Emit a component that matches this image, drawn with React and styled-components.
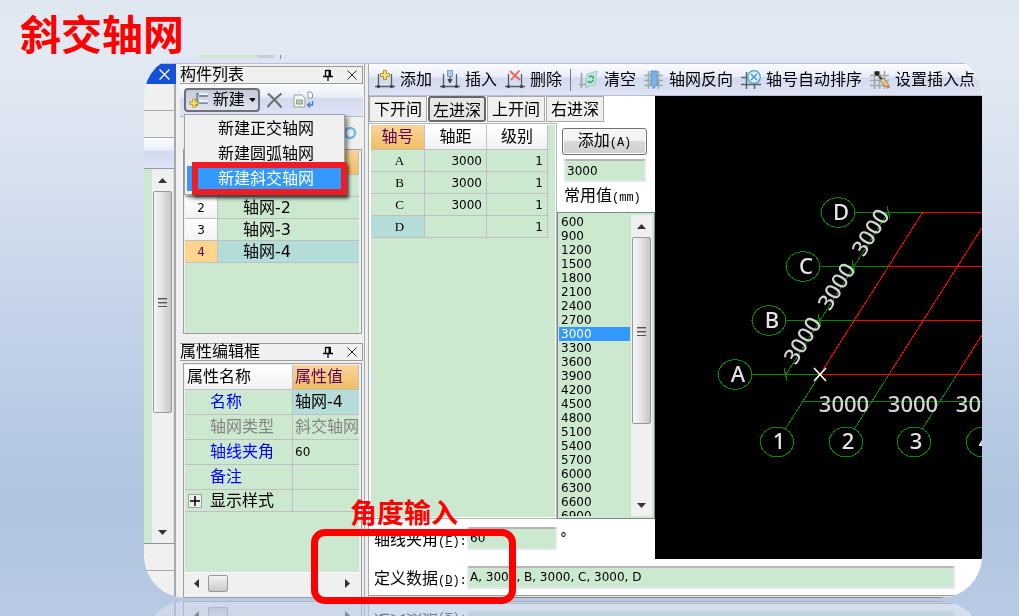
import React, { useState } from "react";
import styled, { createGlobalStyle, css } from "styled-components";

const GREEN = "#cce8cf";
const TEAL = "#b4dcd8";
const LINE = "#c0c0c4";
const FACE = "#f0f0f0";
const AMBER = "linear-gradient(#f8d49a, #f0bf62)";
const BAR = "linear-gradient(#fbfcff 0%, #e9edf9 40%, #d3daef 45%, #dfe4f5 100%)";

const GlobalStyle = createGlobalStyle`
  * { box-sizing: border-box; }
  body {
    margin: 0;
    font-family: "DejaVu Sans", "Noto Sans CJK SC", sans-serif;
    font-size: 12px;
    color: #000;
  }
  button, input { font: inherit; color: inherit; }
  ul { list-style: none; margin: 0; padding: 0; }
`;

const Page = styled.main`
  min-height: 100vh;
  padding: 0 37px 18px 144px;
  overflow: hidden;
  background: linear-gradient(#dfe7f1 0%, #e2e9f2 10%, #d5e0ee 30%, #c3d2e9 52%, #afc4df 82%, #b9cae4 100%);
`;

const Heading = styled.h1`
  height: 55px;
  margin: 0 0 0 -124px;
  padding-top: 6px;
  font-size: 41px;
  line-height: 60px;
  font-weight: 700;
  color: #f00;
`;

const Stage = styled.div`
  position: relative;
`;

const Window = styled.section`
  overflow: hidden;
  border-radius: 42px;
  background: ${FACE};
  -webkit-box-reflect: below 3px linear-gradient(transparent 0%, rgba(0, 0, 0, 0.4) 100%);
`;

const TopStrip = styled.div`
  display: flex;
  gap: 6px;
  height: 9px;
  padding-left: 54px;
  background: #dfe4f4;
  border-bottom: 1px solid #b9bed0;
`;

const StripField = styled.span`
  width: 76px;
  height: 3px;
  background: ${GREEN};
  border-right: 16px solid #c9ccd4;
`;

const StripTick = styled.span`
  width: 1px;
  height: 4px;
  background: #889;
`;

const Columns = styled.div`
  display: grid;
  grid-template-columns: 32px 189px minmax(0, 1fr);
`;

/* far left, cut-off dock */
const Dock = styled.div`
  display: flex;
  flex-direction: column;
  border-right: 2px solid #a6aaae;
`;

const DockTitle = styled.div`
  display: flex;
  justify-content: flex-end;
  align-items: center;
  height: 20px;
  padding-right: 6px;
  margin-right: -2px;
  background: #1450d8;
  color: #fff;
`;

const DockCell = styled.div`
  height: 27px;
  border-bottom: 1px solid #a8a8a8;
`;

const DockBar = styled.div`
  height: 31px;
  background: ${BAR};
  border-bottom: 1px solid #99a;
`;

const DockList = styled.div`
  flex: 1;
  display: flex;
  justify-content: flex-end;
  padding-right: 1px;
  background: ${GREEN};
  border-bottom: 1px solid #8b9598;
`;

const Scroll = styled.div`
  display: flex;
  flex-direction: column;
  justify-content: space-between;
  width: 21px;
  background: ${FACE};
`;

const ScrollStart = styled.div`
  display: flex;
  flex-direction: column;
`;

const ScrollArrow = styled.span`
  display: grid;
  place-items: center;
  width: 100%;
  height: 22px;
`;

const ScrollThumb = styled.span`
  display: grid;
  place-items: center;
  height: ${(props) => props.$size}px;
  margin: 0 1px;
  border: 1px solid #989898;
  border-radius: 2px;
  background: linear-gradient(90deg, #f6f6f6, #e4e4e6 45%, #c4c4ca);
`;

/* panels */
const Panels = styled.div`
  display: flex;
  flex-direction: column;
  padding: 2px 1px 0 4px;
  border-right: 1px solid #a6aaae;
`;

const PanelTitle = styled.header`
  display: flex;
  align-items: center;
  gap: 14px;
  height: 18px;
  padding-right: 5px;
  border: 1px solid #9a9a9a;
  border-left: 0;
`;

const PanelName = styled.h2`
  flex: 1;
  margin: 0;
  font-size: 16px;
  line-height: 16px;
  font-weight: 400;
`;

const PanelTools = styled.div`
  position: relative;
  display: flex;
  align-items: center;
  gap: 6px;
  height: 32px;
  padding-left: 4px;
  background: ${BAR};
`;

const NewButton = styled.button`
  display: flex;
  align-items: center;
  gap: 4px;
  width: 76px;
  height: 24px;
  padding: 0 3px;
  border: 2px solid #6c7078;
  border-radius: 4px;
  background: linear-gradient(#c4c9d6, #e0e4ef);
  font-size: 16px;
  line-height: 20px;
  white-space: nowrap;
`;

const IconButton = styled.button`
  display: grid;
  place-items: center;
  height: 24px;
  margin-right: 4px;
  padding: 0;
  border: 0;
  background: none;
`;

const Menu = styled.ul`
  position: absolute;
  z-index: 2;
  top: 30px;
  left: 4px;
  width: 161px;
  padding: 1px 2px 3px;
  border: 1px solid #a0a0a0;
  background: ${FACE};
  box-shadow: 3px 3px 4px rgba(0, 0, 0, 0.45);
`;

const MenuItem = styled.li`
  position: relative;
  display: flex;
  align-items: center;
  height: 25px;
  padding-left: 31px;
  font-size: 16px;
  line-height: 24px;
  white-space: nowrap;
  ${(props) =>
    props.$active &&
    css`
      background: #3399ff;
      color: #fff;
      &::after {
        content: "";
        position: absolute;
        inset: -4px -5px;
        left: 5px;
        border: 6px solid #ee1c25;
        box-shadow: 2px 3px 3px rgba(0, 0, 0, 0.5);
      }
    `}
`;

const SubTools = styled.div`
  display: flex;
  align-items: center;
  justify-content: flex-end;
  height: 33px;
  padding-right: 6px;
  border-top: 1px solid #b4b8c4;
`;

const Frame = styled.div`
  display: flex;
  flex-direction: column;
  margin: 0 1px 0 3px;
  padding: 0 2px 0 1px;
  border: 1px solid #9c9ca4;
  ${(props) =>
    props.$grow
      ? css`
          flex: 1;
          margin-top: 2px;
          padding-top: 1px;
        `
      : css`
          height: 185px;
          margin-bottom: 9px;
        `}
`;

const FrameFill = styled.div`
  flex: 1;
  background: ${GREEN};
`;

const HScroll = styled.div`
  display: flex;
  align-items: center;
  height: 22px;
  margin-bottom: 3px;
  background: ${FACE};
  border-top: 1px solid #fff;
`;

const HArrow = styled.span`
  display: grid;
  place-items: center;
  width: 23px;
  ${(props) => props.$end && "margin-left: auto;"}
`;

const HThumb = styled.span`
  width: 20px;
  height: 17px;
  border: 1px solid #989898;
  border-radius: 2px;
  background: linear-gradient(#f4f4f4, #c8c8cc);
`;

const Grid = styled.table`
  width: ${(props) => props.$width || "100%"};
  table-layout: fixed;
  border-spacing: 0;
  background: ${GREEN};

  th, td {
    height: 22px;
    padding: 0;
    border-right: 1px solid ${LINE};
    border-bottom: 1px solid ${LINE};
    font-weight: 400;
    line-height: 20px;
    white-space: nowrap;
    overflow: hidden;
  }
  thead th {
    height: 25px;
    font-size: 16px;
    background: linear-gradient(#fff, #f1f1f3);
  }
`;

const Col = styled.col`
  width: ${(props) => props.$w}px;
`;

const HeadCell = styled.th`
  ${(props) =>
    props.$left &&
    css`
      && {
        padding-left: 2px;
        text-align: left;
      }
    `}
  ${(props) =>
    props.$hot &&
    css`
      && {
        background: ${AMBER};
        color: #5a005a;
      }
    `}
`;

const RowNumber = styled.th`
  background: ${(props) => (props.$hot ? "#ffd48c" : "linear-gradient(#fff, #f3f3f3)")};
  color: ${(props) => (props.$hot ? "#5a005a" : "#000")};
`;

const TreeCell = styled.td`
  && {
    padding-left: 25px;
    border-right: 0;
  }
  font-size: 16px;
  background: ${(props) => (props.$hot ? TEAL : "transparent")};
`;

const PropRow = styled.tr`
  color: ${(props) => props.$color || "#000"};
  th, td {
    height: ${(props) => (props.$group ? 22 : 25)}px;
    text-align: left;
  }
  td:last-child { border-right: 0; }
`;

const PropName = styled.th`
  && { padding-left: ${(props) => (props.$group ? 3 : 25)}px; }
  font-size: 16px;
`;

const PropValue = styled.td`
  && { padding-left: 2px; }
  font-size: ${(props) => (props.$wide ? 16 : 12)}px;
  background: ${(props) => (props.$hot ? TEAL : "transparent")};
`;

const PropText = styled.span`
  color: ${(props) => props.$color || "inherit"};
`;

const Expander = styled.button`
  display: inline-grid;
  place-items: center;
  width: 14px;
  height: 14px;
  margin-right: 8px;
  padding: 0;
  border: 1px solid #a0a0a0;
  background: ${FACE};
  vertical-align: middle;
`;

/* editor */
const Editor = styled.div`
  display: flex;
  flex-direction: column;
  margin-left: 3px;
  border-left: 1px solid #a6aaae;
  background: #fff;
`;

const Toolbar = styled.div`
  display: flex;
  align-items: center;
  gap: 8px;
  height: 32px;
  padding-left: 6px;
  background: ${BAR};
  border-bottom: 1px solid #b8bccb;
`;

const Tool = styled.button`
  display: flex;
  flex: none;
  align-items: center;
  gap: 5px;
  padding: 0;
  border: 0;
  background: none;
  font-size: 16px;
  line-height: 24px;
`;

const Divider = styled.span`
  flex: none;
  width: 1px;
  height: 22px;
  background: #777b88;
`;

const Work = styled.div`
  display: grid;
  grid-template-columns: 286px minmax(0, 1fr);
`;

const Tabs = styled.div`
  display: flex;
  gap: 1px;
  height: 27px;
`;

const Tab = styled.button`
  height: 26px;
  padding: 1px 4px 0;
  border: 1px solid #a8a8a8;
  background: ${FACE};
  font-size: 16px;
  line-height: 22px;
  ${(props) =>
    props.$active &&
    css`
      border: 2px solid #686868;
      border-radius: 3px;
      padding: 2px 3px 0;
      background: #e6e6e6;
    `}
`;

const Split = styled.div`
  display: grid;
  grid-template-columns: 188px 98px;
`;

const AxisPane = styled.div`
  padding: 1px 1px 1px 2px;
  border-top: 1px solid #b4b4bc;
  border-right: 1px solid #b4b4bc;
  border-bottom: 1px solid #b4b4bc;
`;

const AxisFill = styled.div`
  height: 100%;
  background: ${GREEN};
`;

const AxisName = styled.th`
  && { padding-left: 4px; }
  font-family: "Liberation Serif", serif;
  font-size: 13px;
  background: ${(props) => (props.$hot ? TEAL : "transparent")};
`;

const NumCell = styled.td`
  && { padding-right: 4px; }
  text-align: right;
`;

const Values = styled.div`
  display: flex;
  flex-direction: column;
  padding-top: 5px;
`;

const AddButton = styled.button`
  height: 27px;
  margin: 0 8px 0 5px;
  padding: 0;
  border: 1px solid #707070;
  border-radius: 3px;
  background: linear-gradient(#f4f4f4 45%, #dadada 50%, #d0d0d0);
  box-shadow: inset 0 0 0 1px #fafafa;
  font-size: 16px;
  line-height: 22px;
`;

const Field = styled.input`
  width: ${(props) => props.$width || "auto"};
  height: 23px;
  padding: 0 0 0 1px;
  border: 2px solid #e3e7f0;
  border-top-color: #b4b6bc;
  border-radius: 2px;
  background: ${GREEN};
  font-size: 12px;
`;

const ValueField = styled(Field)`
  margin: 4px 9px 0 7px;
`;

const ValueLabel = styled.label`
  padding-left: 7px;
  font-size: 16px;
  line-height: 27px;
`;

const Mono = styled.span`
  font-family: "Liberation Mono", monospace;
  font-size: 12px;
`;

const ListBox = styled.div`
  display: flex;
  height: 307px;
  padding: 2px 2px 2px 1px;
  border: 1px solid #7c8890;
  background: ${GREEN};
`;

const Options = styled.ul`
  flex: 1;
  overflow: hidden;
`;

const Option = styled.li`
  height: 14px;
  margin-right: 1px;
  padding-left: 2px;
  line-height: 14px;
  cursor: default;
  ${(props) =>
    props.$selected &&
    css`
      background: #3399ff;
      color: #fff;
    `}
`;

const FormRow = styled.div`
  display: flex;
  align-items: center;
  height: ${(props) => props.$height}px;
  padding-left: 5px;
  padding-right: 27px;

  label {
    flex: none;
    width: 93px;
    font-size: 16px;
    white-space: nowrap;
  }
`;

const Degree = styled.span`
  font-size: 14px;
  padding-left: 3px;
`;

const Foot = styled.div`
  height: 3px;
  border-top: 1px solid #9c9c9c;
  border-bottom: 1px solid #8c8484;
  background: #e4e4e4;
`;

const Canvas = styled.div`
  overflow: hidden;
  background: #000;
  svg { display: block; }
`;

const Callout = styled.div`
  position: absolute;
  z-index: 3;
  left: 167px;
  bottom: -6px;
  width: 205px;
  height: 75px;
  border: 7px solid #f00;
  border-radius: 14px;
`;

const CalloutText = styled.p`
  position: absolute;
  z-index: 3;
  left: 206px;
  bottom: 68px;
  margin: 0;
  font-size: 27px;
  line-height: 32px;
  font-weight: 700;
  color: #f00;
`;

const CrossIcon = ({ size = 10, color = "#222", stroke = 1 }) => (
  <svg width={size} height={size} viewBox="0 0 10 10" aria-hidden="true">
    <path d="M.5.5l9 9M9.5.5l-9 9" stroke={color} strokeWidth={stroke} fill="none" />
  </svg>
);

const PinIcon = () => (
  <svg width="10" height="12" viewBox="0 0 10 12" aria-hidden="true">
    <path d="M3 1.500h4M2.500 1v6M0 7.500h10M5 8v4" stroke="#000" strokeWidth="1.300" fill="none" />
    <path d="M5.500 1h2.500v6H5.500z" />
  </svg>
);

const ARROWS = {
  up: "M0 6l4.500-5L9 6z",
  down: "M0 1h9L4.500 6z",
  left: "M7 0v9L2 4.500z",
  right: "M2 0v9l5-4.500z",
};

const Arrow = ({ dir }) => (
  <svg width="9" height={dir === "up" || dir === "down" ? 7 : 9} aria-hidden="true">
    <path d={ARROWS[dir]} fill="#333" />
  </svg>
);

const Grip = () => (
  <svg width="9" height="10" aria-hidden="true">
    <path d="M0 1.500h9M0 5.500h9M0 9.500h9" stroke="#555" />
    <path d="M0 2.500h9M0 6.500h9" stroke="#aaa" />
  </svg>
);

const Scrollbar = ({ thumb }) => (
  <Scroll aria-hidden="true">
    <ScrollStart>
      <ScrollArrow>
        <Arrow dir="up" />
      </ScrollArrow>
      <ScrollThumb $size={thumb}>
        <Grip />
      </ScrollThumb>
    </ScrollStart>
    <ScrollArrow>
      <Arrow dir="down" />
    </ScrollArrow>
  </Scroll>
);

const NewIcon = () => (
  <svg width="22" height="20" viewBox="0 0 22 20" aria-hidden="true">
    <path d="M9 17V3h3M9 11h3" stroke="#5f7486" strokeWidth="1.500" fill="none" />
    <path d="M11 2h10v3H11zM11 10h10v3H11z" fill="#e8f2fa" />
    <path d="M11 5.500h10M11 13.500h10" stroke="#557186" strokeWidth="1.500" />
    <path d="M4 9h3v3h3v3H7v3H4v-3H1v-3h3z" fill="#ffe45c" stroke="#b8962a" />
  </svg>
);

const DeleteIcon = () => (
  <svg width="17" height="17" viewBox="0 0 17 17" aria-hidden="true">
    <path d="M2 1.500c4 3.500 9 8.500 13.500 14M15.500 1.500C10 6 5 10.500 1.500 15" stroke="#6a746c" strokeWidth="2.200" fill="none" />
  </svg>
);

const CopyIcon = () => (
  <svg width="21" height="18" viewBox="0 0 21 18" aria-hidden="true">
    <path d="M1 4h8l3 3v9H1z" fill="#f2f6f0" stroke="#96a596" />
    <path d="M3.500 9h6v4h-6z" fill="#b9ccb6" stroke="#8ea08c" />
    <path d="M15 1h3l1.500 2v4H15z" fill="#fff" stroke="#8a97a8" />
    <path d="M19.500 10v4H15M17 11.500L14.500 14l2.500 2.500" fill="none" stroke="#3d78d8" strokeWidth="1.300" />
  </svg>
);

const AxisBase = () => (
  <>
    <path d="M3.500 4v14M16.500 4v14M0 16.500h20" stroke="#555d60" strokeWidth="1.300" fill="none" />
    <circle cx="3.500" cy="16.500" r="1.800" fill="#444c50" />
    <circle cx="16.500" cy="16.500" r="1.800" fill="#444c50" />
  </>
);

const MeshBase = () => (
  <path d="M4.500 1v18M9.500 1v18M14.500 1v18M0 5.500h19M0 10.500h19M0 15.500h19" stroke="#a0aca2" strokeWidth="1.600" fill="none" />
);

const TOOL_DRAWINGS = {
  add: (
    <>
      <AxisBase />
      <path d="M8.500.5h3v3h3v3h-3v3h-3v-3h-3v-3h3z" fill="#f5e26a" stroke="#a9953c" />
    </>
  ),
  insert: (
    <>
      <AxisBase />
      <path d="M7.500.5h5v6h-5z" fill="#a9cdec" stroke="#7899b8" />
      <path d="M10 7v3M8 9.500h4l-2 3.500z" fill="#444" stroke="#444" />
    </>
  ),
  remove: (
    <>
      <AxisBase />
      <path d="M5 1l10 9M14.500.5L6 10" stroke="#f0605c" strokeWidth="1.800" fill="none" />
    </>
  ),
  clear: (
    <>
      <path d="M2.500 3v15M7.500 9v9M0 14.500h12" stroke="#9aa59c" strokeWidth="1.600" fill="none" />
      <path d="M8 4l10-3-2 14-9 2z" fill="#c3e4e4" stroke="#a3cccc" />
      <path d="M10 7c3-2 5 0 4 2M14 10c-1 3-4 3-5 1" stroke="#35b060" strokeWidth="1.800" fill="none" />
    </>
  ),
  flip: (
    <>
      <MeshBase />
      <path d="M7 1h6v12h2l-5 5-4-4h1z" fill="#7fb0ea" stroke="#5c92d6" />
    </>
  ),
  sort: (
    <>
      <path d="M5.500 2v17M13.500 13v6M0 7.500h6M0 14.500h20" stroke="#59656a" strokeWidth="1.500" fill="none" />
      <circle cx="13" cy="7" r="6.300" fill="#dceffb" stroke="#4c9fd8" strokeWidth="1.300" />
      <path d="M10 4l6 6M16 4l-6 6" stroke="#3f8fce" strokeWidth="1.200" />
    </>
  ),
  pick: (
    <>
      <MeshBase />
      <circle cx="7" cy="3.500" r="2.400" fill="#222" />
      <path d="M9 6l3.500 4" stroke="#444" strokeWidth="2" />
      <path d="M12 9.500l5 6" stroke="#8d7a48" strokeWidth="4.600" />
      <path d="M12 9.500l5 6" stroke="#eccb7e" strokeWidth="3.200" />
      <path d="M17 15.500l2 2.500" stroke="#c98078" strokeWidth="3.600" />
    </>
  ),
};

const ToolIcon = ({ name }) => (
  <svg width="20" height="20" viewBox="0 0 20 20" aria-hidden="true">
    {TOOL_DRAWINGS[name]}
  </svg>
);

const tools = [
  { id: "add", name: "添加" },
  { id: "insert", name: "插入" },
  { id: "remove", name: "删除", divider: true },
  { id: "clear", name: "清空" },
  { id: "flip", name: "轴网反向" },
  { id: "sort", name: "轴号自动排序" },
  { id: "pick", name: "设置插入点" },
];

const menuItems = ["新建正交轴网", "新建圆弧轴网", "新建斜交轴网"];
const tabs = ["下开间", "左进深", "上开间", "右进深"];

const axes = [
  { name: "A", span: "3000" },
  { name: "B", span: "3000" },
  { name: "C", span: "3000" },
  { name: "D", span: "" },
];

const properties = [
  { name: "名称", value: "轴网-4", color: "#00f", hot: true, wide: true },
  { name: "轴网类型", value: "斜交轴网", color: "#848484", wide: true },
  { name: "轴线夹角", value: "60", color: "#00f" },
  { name: "备注", value: "", color: "#00f" },
];

const commonValues = [600, 900];
for (let v = 1200; v <= 6900; v += 300) commonValues.push(v);

/* drawing area: rows A-D step up and right, columns 1-4 step right */
const ROWS = ["A", "B", "C", "D"].map((label, i) => ({
  label,
  x: 165 + Math.round(i * 34.2),
  y: 278.5 - i * 54,
}));
const COLS = ["1", "2", "3", "4"].map((label, i) => ({
  label,
  x: 165 + Math.round(i * 68.6),
}));

const bubblePoints = (cx, cy) =>
  Array.from({ length: 16 }, (_, i) => {
    const a = (i * Math.PI) / 8;
    return `${(cx + 17 * Math.cos(a)).toFixed(1)},${(cy + 15 * Math.sin(a)).toFixed(1)}`;
  }).join(" ");

const AxisDrawing = () => (
  <svg width="100%" height="463" aria-label="轴网">
    <g fill="none" stroke="#008a00" shapeRendering="crispEdges">
      {ROWS.map((r) => (
        <g key={r.label}>
          <path d={`M${r.x - 68} ${r.y}H${r.x}`} />
          <path d={`M${r.x - 36} ${r.y - 6}l3 12`} />
          <polygon points={bubblePoints(r.x - 85, r.y)} />
        </g>
      ))}
      {COLS.map((c) => (
        <g key={c.label}>
          <path d={`M${c.x} 278.500l-35 55`} />
          <polygon points={bubblePoints(c.x - 43, 346)} />
        </g>
      ))}
      <path d="M131 278.500L233 116.500" />
      <path d="M148 305.500H500" />
    </g>
    <g fill="none" stroke="#f00" shapeRendering="crispEdges">
      {ROWS.map((r) => (
        <path key={r.label} d={`M${r.x} ${r.y}H1600`} />
      ))}
      {COLS.map((c) => (
        <path key={c.label} d={`M${c.x} 278.500l102.600 -162`} />
      ))}
    </g>
    <path d="M159 272l12 13M171 272l-12 13" stroke="#fff" strokeWidth="1.600" />
    <g fill="#e4e4e4" fontFamily="Noto Sans, sans-serif" fontSize="22" fontWeight="500" textAnchor="middle">
      {ROWS.map((r) => (
        <text key={r.label} x={r.x - 82} y={r.y + 7}>
          {r.label}
        </text>
      ))}
      {COLS.map((c) => (
        <text key={c.label} x={c.x - 41} y="353">
          {c.label}
        </text>
      ))}
    </g>
    <g fill="#d4d4d4" fontFamily="Noto Sans, sans-serif" fontSize="22" fontWeight="500" textAnchor="middle">
      {ROWS.slice(0, 3).map((r) => (
        <text key={r.label} transform={`translate(${r.x - 11} ${r.y - 30}) rotate(-58)`}>
          3000
        </text>
      ))}
      {COLS.map((c) => (
        <text key={c.label} x={c.x + 24} y="316">
          3000
        </text>
      ))}
    </g>
  </svg>
);

const PanelHeader = ({ name }) => (
  <PanelTitle>
    <PanelName>{name}</PanelName>
    <PinIcon />
    <CrossIcon />
  </PanelTitle>
);

const ComponentPanel = () => (
  <>
    <PanelHeader name="构件列表" />
    <PanelTools>
      <NewButton type="button">
        <NewIcon />
        新建
        <svg width="7" height="4" aria-hidden="true">
          <path d="M0 0h7L3.500 4z" />
        </svg>
      </NewButton>
      <IconButton type="button" aria-label="删除构件">
        <DeleteIcon />
      </IconButton>
      <IconButton type="button" aria-label="复制构件">
        <CopyIcon />
      </IconButton>
      <Menu role="menu">
        {menuItems.map((item, i) => (
          <MenuItem key={item} role="menuitem" $active={i === 2}>
            {item}
          </MenuItem>
        ))}
      </Menu>
    </PanelTools>
    <SubTools>
      <svg width="13" height="14" aria-hidden="true">
        <circle cx="6" cy="7" r="5" fill="#eaf6ff" stroke="#6fbbe8" strokeWidth="2.500" />
      </svg>
    </SubTools>
    <Frame>
      <Grid>
        <colgroup>
          <Col $w={33} />
          <col />
        </colgroup>
        <thead>
          <tr>
            <HeadCell />
            <HeadCell $hot />
          </tr>
        </thead>
        <tbody>
          {[1, 2, 3, 4].map((n) => (
            <tr key={n}>
              <RowNumber $hot={n === 4}>{n}</RowNumber>
              <TreeCell $hot={n === 4}>轴网-{n}</TreeCell>
            </tr>
          ))}
        </tbody>
      </Grid>
      <FrameFill />
    </Frame>
  </>
);

const PropertyPanel = () => (
  <>
    <PanelHeader name="属性编辑框" />
    <Frame $grow>
      <Grid>
        <colgroup>
          <Col $w={108} />
          <col />
        </colgroup>
        <thead>
          <tr>
            <HeadCell $left>属性名称</HeadCell>
            <HeadCell $left $hot>
              属性值
            </HeadCell>
          </tr>
        </thead>
        <tbody>
          {properties.map((item) => (
            <PropRow key={item.name} $color={item.color}>
              <PropName>{item.name}</PropName>
              <PropValue $hot={item.hot} $wide={item.wide}>
                <PropText $color={item.hot || item.value === "60" ? "#000" : null}>
                  {item.value}
                </PropText>
              </PropValue>
            </PropRow>
          ))}
          <PropRow $group>
            <PropName $group>
              <Expander type="button" aria-label="展开">
                <svg width="10" height="10">
                  <path d="M0 5h10M5 0v10" stroke="#000" strokeWidth="1.500" />
                </svg>
              </Expander>
              显示样式
            </PropName>
            <PropValue />
          </PropRow>
        </tbody>
      </Grid>
      <FrameFill />
      <HScroll aria-hidden="true">
        <HArrow>
          <Arrow dir="left" />
        </HArrow>
        <HThumb />
        <HArrow $end>
          <Arrow dir="right" />
        </HArrow>
      </HScroll>
    </Frame>
  </>
);

const App = () => {
  const [tab, setTab] = useState("左进深");
  const [value, setValue] = useState("3000");
  const [angle, setAngle] = useState("60");
  const [data, setData] = useState("A, 3000, B, 3000, C, 3000, D");

  return (
    <Page>
      <GlobalStyle />
      <Heading>斜交轴网</Heading>
      <Stage>
        <Window>
          <TopStrip>
            <StripField />
            <StripTick />
          </TopStrip>
          <Columns>
            <Dock>
              <DockTitle>
                <CrossIcon size={11} color="#fff" stroke={1.2} />
              </DockTitle>
              <DockCell />
              <DockCell />
              <DockBar />
              <DockList>
                <Scrollbar thumb={222} />
              </DockList>
              <DockCell />
              <DockCell />
            </Dock>

            <Panels>
              <ComponentPanel />
              <PropertyPanel />
            </Panels>

            <Editor>
              <Toolbar>
                {tools.map((item) => (
                  <React.Fragment key={item.id}>
                    <Tool type="button">
                      <ToolIcon name={item.id} />
                      {item.name}
                    </Tool>
                    {item.divider && <Divider />}
                  </React.Fragment>
                ))}
              </Toolbar>
              <Work>
                <div>
                  <Tabs>
                    {tabs.map((name) => (
                      <Tab
                        key={name}
                        type="button"
                        $active={name === tab}
                        onClick={() => setTab(name)}
                      >
                        {name}
                      </Tab>
                    ))}
                  </Tabs>
                  <Split>
                    <AxisPane>
                      <AxisFill>
                        <Grid $width="177px">
                          <colgroup>
                            <Col $w={54} />
                            <Col $w={62} />
                            <Col $w={61} />
                          </colgroup>
                          <thead>
                            <tr>
                              <HeadCell $hot>轴号</HeadCell>
                              <HeadCell>轴距</HeadCell>
                              <HeadCell>级别</HeadCell>
                            </tr>
                          </thead>
                          <tbody>
                            {axes.map((axis) => (
                              <tr key={axis.name}>
                                <AxisName $hot={axis.name === "D"}>{axis.name}</AxisName>
                                <NumCell>{axis.span}</NumCell>
                                <NumCell>1</NumCell>
                              </tr>
                            ))}
                          </tbody>
                        </Grid>
                      </AxisFill>
                    </AxisPane>
                    <Values>
                      <AddButton type="button">
                        添加<Mono>(A)</Mono>
                      </AddButton>
                      <ValueField
                        id="span"
                        size={4}
                        value={value}
                        onChange={(e) => setValue(e.target.value)}
                      />
                      <ValueLabel htmlFor="span">
                        常用值<Mono>(mm)</Mono>
                      </ValueLabel>
                      <ListBox>
                        <Options role="listbox" aria-label="常用值">
                          {commonValues.map((v) => (
                            <Option
                              key={v}
                              role="option"
                              aria-selected={String(v) === value}
                              $selected={String(v) === value}
                              onClick={() => setValue(String(v))}
                            >
                              {v}
                            </Option>
                          ))}
                        </Options>
                        <Scrollbar thumb={187} />
                      </ListBox>
                    </Values>
                  </Split>
                  <FormRow $height={38}>
                    <label htmlFor="angle">
                      轴线夹角
                      <Mono>
                        (<u>F</u>):
                      </Mono>
                    </label>
                    <Field
                      id="angle"
                      $width="90px"
                      value={angle}
                      onChange={(e) => setAngle(e.target.value)}
                    />
                    <Degree>°</Degree>
                  </FormRow>
                </div>
                <Canvas>
                  <AxisDrawing />
                </Canvas>
              </Work>
              <FormRow $height={36}>
                <label htmlFor="data">
                  定义数据
                  <Mono>
                    (<u>D</u>):
                  </Mono>
                </label>
                <Field
                  id="data"
                  $width="100%"
                  value={data}
                  onChange={(e) => setData(e.target.value)}
                />
              </FormRow>
              <Foot />
            </Editor>
          </Columns>
        </Window>
        <CalloutText>角度输入</CalloutText>
        <Callout />
      </Stage>
    </Page>
  );
};

export default App;
